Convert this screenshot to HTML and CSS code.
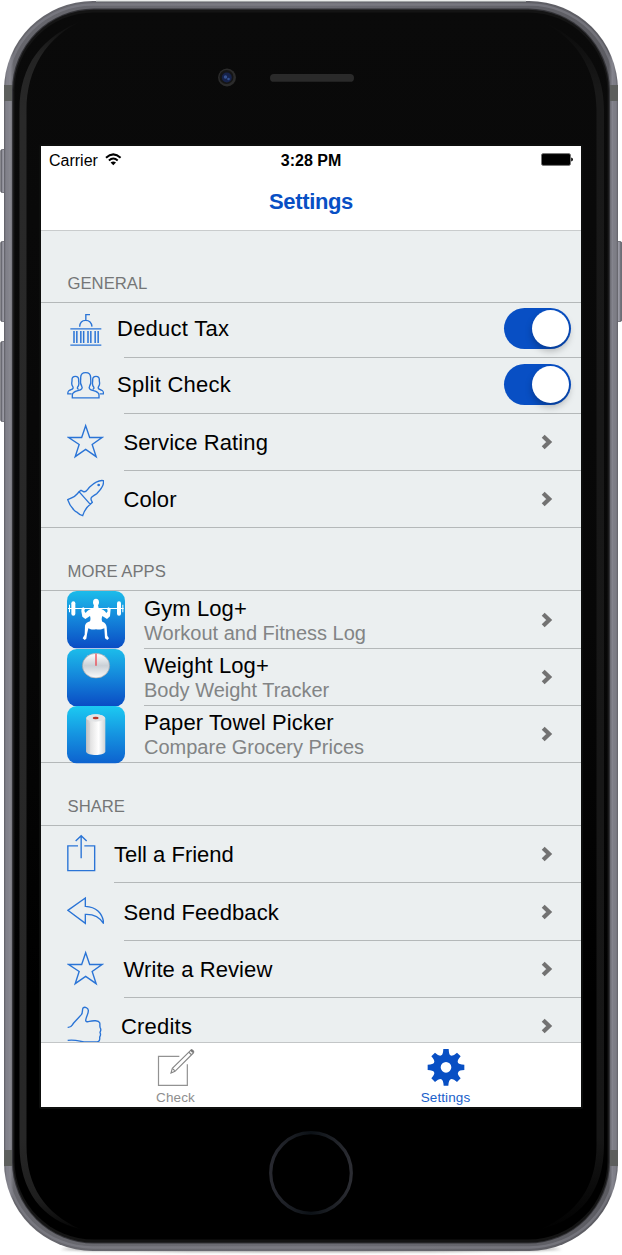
FILE: index.html
```html
<!DOCTYPE html>
<html lang="en">
<head>
<meta charset="utf-8">
<title>Settings</title>
<link rel="stylesheet" href="styles.css">
</head>
<body>
<svg width="0" height="0" class="defs" aria-hidden="true">
  <defs>
    <linearGradient id="app-blue" x1="0" y1="0" x2="0" y2="1"><stop offset="0" stop-color="#1cbcea"/><stop offset=".5" stop-color="#1484da"/><stop offset="1" stop-color="#0a4cc4"/></linearGradient>
    <linearGradient id="app-sky" x1="0" y1="0" x2="0" y2="1"><stop offset="0" stop-color="#1ccaf2"/><stop offset=".5" stop-color="#1593e0"/><stop offset="1" stop-color="#0d62cf"/></linearGradient>
    <linearGradient id="dial" x1="0" y1="0" x2="0" y2="1"><stop offset="0" stop-color="#fff"/><stop offset=".5" stop-color="#c9d0d6"/><stop offset="1" stop-color="#fafafa"/></linearGradient>
    <linearGradient id="roll" x1="0" y1="0" x2="1" y2="0"><stop offset="0" stop-color="#b9bcc0"/><stop offset=".25" stop-color="#e4e4e4"/><stop offset=".65" stop-color="#fff"/><stop offset="1" stop-color="#cfd3d6"/></linearGradient>
    <symbol id="chevron" viewBox="0 0 12 16"><path d="M2.2 2.200 8.200 8l-6 5.800" fill="none" stroke="#727272" stroke-width="4.200"/></symbol>
    <symbol id="star" viewBox="201 552 111 171"><path d="M257 587 269 622.500H306L276.500 643.500 288.500 680 257 658 225.500 680 237.500 643.500 206 622.500H245Z"/></symbol>
  </defs>
</svg>
<main class="phone">
  <svg class="frame" viewBox="0 0 622 1255" aria-hidden="true">
    <defs>
      <linearGradient id="metal" x1="0" x2="1" y1="0" y2="0"><stop offset="0" stop-color="#606067"/><stop offset=".004" stop-color="#7d7d86"/><stop offset=".01" stop-color="#898991"/><stop offset=".016" stop-color="#66666c"/><stop offset=".5" stop-color="#6c6c74"/><stop offset=".985" stop-color="#5c5c62"/><stop offset=".991" stop-color="#85858e"/><stop offset="1" stop-color="#65656c"/></linearGradient>
      <linearGradient id="glass" x1="0" x2="0" y1="0" y2="1"><stop offset="0" stop-color="#0a0a0a"/><stop offset=".5" stop-color="#070707"/><stop offset=".8" stop-color="#000"/></linearGradient>
      <linearGradient id="shineL" gradientUnits="userSpaceOnUse" x1="0" x2="0" y1="20" y2="1235"><stop offset="0" stop-color="#2a2a2a" stop-opacity="0"/><stop offset=".03" stop-color="#232323"/><stop offset=".08" stop-color="#292929"/><stop offset=".92" stop-color="#272727"/><stop offset=".97" stop-color="#1e1e1e"/><stop offset="1" stop-color="#222" stop-opacity="0"/></linearGradient>
      <linearGradient id="shineR" gradientUnits="userSpaceOnUse" x1="0" x2="0" y1="20" y2="1235"><stop offset="0" stop-color="#1a1a1a" stop-opacity="0"/><stop offset=".06" stop-color="#191919"/><stop offset=".92" stop-color="#161616"/><stop offset="1" stop-color="#161616" stop-opacity="0"/></linearGradient>
      <linearGradient id="ring" x1="1" y1="0" x2="0" y2="0"><stop offset="0" stop-color="#2c2d33"/><stop offset=".5" stop-color="#0c1116"/><stop offset="1" stop-color="#282930"/></linearGradient>
      <linearGradient id="key" x1="0" x2="1" y1="0" y2="0"><stop offset="0" stop-color="#55555d"/><stop offset=".5" stop-color="#a3a3ad"/><stop offset="1" stop-color="#55555d"/></linearGradient>
      <filter id="soft" x="-10%" y="-200%" width="120%" height="500%"><feGaussianBlur stdDeviation="1.500"/></filter>
    </defs>
    <ellipse cx="311" cy="1249" rx="250" ry="3" fill="#999" filter="url(#soft)"/>
    <g fill="url(#key)" stroke="#53535b" stroke-width=".7">
      <rect x=".7" y="149.500" width="5" height="43" rx="1.500"/><rect x=".7" y="241.500" width="5" height="80" rx="1.500"/>
      <rect x=".7" y="341.500" width="5" height="80" rx="1.500"/><rect x="616" y="241.500" width="5.600" height="80" rx="1.500"/>
    </g>
    <rect x="4" y="1" width="614" height="1250" rx="89" fill="url(#metal)"/>
    <rect x="6.500" y="4.500" width="609" height="1243" rx="86" fill="none" stroke="#85858e" stroke-width="2.500" opacity=".55"/>
    <g fill="#5d5f5d"><path d="M4 85h9v16H4zM4 1150h9v16H4zM609 85h9v16h-9zM609 1150h9v16h-9z"/></g>
    <path d="M96 1.200H526" stroke="#b9bdbc"/>
    <rect x="12" y="8.500" width="598" height="1235" rx="82" fill="#333337"/>
    <rect x="13.200" y="9.700" width="595.600" height="1232.800" rx="80.500" fill="#141414"/>
    <rect x="14.500" y="12.500" width="593" height="1227" rx="79" fill="url(#glass)"/>
    <path d="M84 20C42 36 19.500 65 19.500 110V1145C19.500 1192 43 1220 80 1229 45 1213 26.500 1187 26.500 1145V110C26.500 70 46 36 84 20Z" fill="url(#shineL)"/>
    <path d="M538 20C580 36 604 65 604 110V1145C604 1192 580 1220 541 1229 577 1213 596.500 1187 596.500 1145V110C596.500 70 576 36 538 20Z" fill="url(#shineR)"/>
    <circle cx="227" cy="77.500" r="9" fill="#2b2b2b"/><circle cx="226.500" cy="77" r="7" fill="#151515"/><circle cx="226.800" cy="77.500" r="5" fill="#16224a"/><circle cx="225.500" cy="77" r="1.700" fill="#365291"/><circle cx="228.500" cy="79" r="1.300" fill="#31508f"/>
    <rect x="270" y="74" width="84" height="7.800" rx="3.900" fill="#2a2a2a"/>
    <rect x="39" y="144" width="544" height="965" rx="2" fill="#0d0e0d"/>
    <circle cx="311" cy="1173" r="40.300" fill="#000" stroke="url(#ring)" stroke-width="3.200"/>
  </svg>

  <div class="screen">
    <header class="navbar">
      <div class="status">
        <span class="carrier">Carrier
          <svg width="17" height="13" viewBox="0 0 17 13"><g fill="none" stroke="#000" stroke-width="2"><path d="M1 4.700Q8.300-2 15.600 4.700"/><path d="M3.900 7.500Q8.300 3.600 12.700 7.500"/></g><path d="M5.600 9.600Q8.300 7.600 11 9.600L8.300 12.300Z"/></svg>
        </span>
        <span class="time">3:28 PM</span>
        <svg class="battery" width="32" height="13" viewBox="0 0 32 13"><rect x=".5" y=".6" width="29" height="11.800" rx="1.600" stroke="#777" stroke-width=".8"/><path d="M30.200 4.500q1.800.3 1.800 2t-1.800 2z"/></svg>
      </div>
      <h1 class="title">Settings</h1>
    </header>

    <div class="list">
      <h2 class="section first">GENERAL</h2>
      <div class="row toggle-row h55">
        <svg class="icon" viewBox="201 219 111 165"><path d="M211 296.500H304M211 345.500H304M239 290Q240 271 257 271T276 290M257.500 271V254H270"/><path stroke-width="4.500" d="M222 303V339M230.500 303V339M242.500 303V339M251 303V339M264 303V339M272.500 303V339M285.500 303V339M294.500 303V339"/></svg>
        <span class="label x13">Deduct Tax</span><span class="switch"><i></i></span>
      </div>
      <div class="row toggle-row h56">
        <svg class="icon" viewBox="201 384 111 168"><path d="M217 503.500V495C217 487 224 485 234 482 245 479 249 475 245 468 238 459 243 453 242 443 242 433 247 428 257 428S272 433 272 443C271 453 276 459 269 468 265 475 269 479 280 482 290 485 297 487 297 495V503.500Z"/><path d="M215 491.500H203.500C203 482 207 481 213 479 219 477 221 474 218 469 212 461 217 457 216 449 216 442 220 439 226 439S236 442 236 449C235 457 240 463 233 471 231 475 233 477 236 478M299 491.500H310.500C311 482 307 481 301 479 295 477 293 474 296 469 302 461 297 457 298 449 298 442 294 439 288 439S278 442 278 449C279 457 274 463 281 471 283 475 281 477 278 478"/></svg>
        <span class="label x13">Split Check</span><span class="switch"><i></i></span>
      </div>
      <div class="row h57">
        <svg class="icon"><use href="#star"/></svg>
        <span class="label x19">Service Rating</span><svg class="chevron"><use href="#chevron"/></svg>
      </div>
      <div class="row last h57">
        <svg class="icon" viewBox="201 723 111 171"><path d="M203 809C217 804 230 798 237 785L243 781 249 784C259 790 261 779 269 771 282 759 295 749 310 752 313 763 301 780 290 791 281 798 268 801 275 813L277 817 271 823C258 833 252 844 248 857 239 855 234 850 230 846L226 844C216 835 208 825 203 809ZM237 785 271 823"/><circle cx="296" cy="765" r="2"/></svg>
        <span class="label x19">Color</span><svg class="chevron"><use href="#chevron"/></svg>
      </div>

      <h2 class="section">MORE APPS</h2>
      <div class="row app h58">
        <svg class="app-icon" viewBox="0 0 174 174"><rect width="174" height="172" rx="29" fill="url(#app-blue)"/><g fill="#fff"><path d="M3 51H170V54H3z"/><rect x="13" y="31" width="12" height="43" rx="6"/><rect x="150" y="31" width="12" height="43" rx="6"/><path d="M6 41h3v23h-3zM166 41h3v23h-3z"/><ellipse cx="87" cy="34" rx="9" ry="11"/><path d="M81 42H93L95 52C107 55 113 58 118 66L122 61 120 52 125 49 131 53 129 76 120 84 106 75C103 82 104 88 106 92 114 94 118 100 119 108L121 134 126 142 121 147 114 142 112 112C102 117 94 116 87 115 80 116 72 117 64 112L60 130 58 143 53 147 47 142 53 131 54 104C56 97 61 93 69 91 71 86 71 81 69 75L55 84 46 77 43 61 44 51 50 49 54 53 52 60 56 66C61 58 68 55 79 52Z"/></g></svg>
        <div class="app-text"><span class="label">Gym Log+</span><span class="sub">Workout and Fitness Log</span></div><svg class="chevron"><use href="#chevron"/></svg>
      </div>
      <div class="row app h57">
        <svg class="app-icon" viewBox="0 0 174 174"><rect width="174" height="172" rx="29" fill="url(#app-blue)"/><ellipse cx="87" cy="50" rx="41" ry="37" fill="url(#dial)" stroke="#9b9da1" stroke-width="2"/><path d="M87 14V50" stroke="#f0303b" stroke-width="3.500"/></svg>
        <div class="app-text"><span class="label">Weight Log+</span><span class="sub">Body Weight Tracker</span></div><svg class="chevron"><use href="#chevron"/></svg>
      </div>
      <div class="row app last h57">
        <svg class="app-icon" viewBox="0 0 174 174"><rect width="174" height="172" rx="29" fill="url(#app-sky)"/><path d="M57 36C62 22 109 22 115 36V137C110 150 62 150 57 137Z" fill="url(#roll)"/><ellipse cx="86" cy="36" rx="28" ry="11" fill="#e2e4e6"/><path d="M66 50V143" stroke="#c6c8ca" stroke-width="2"/><ellipse cx="86" cy="36" rx="9" ry="4" fill="#b9372b"/></svg>
        <div class="app-text"><span class="label">Paper Towel Picker</span><span class="sub">Compare Grocery Prices</span></div><svg class="chevron"><use href="#chevron"/></svg>
      </div>

      <h2 class="section">SHARE</h2>
      <div class="row sep-73 h57">
        <svg class="icon" viewBox="201 138 111 171"><path d="M234 197.500H203.500V272H284V197.500H253M243.500 235V167M227 183 243.500 167 260 183"/></svg>
        <span class="label x10">Tell a Friend</span><svg class="chevron"><use href="#chevron"/></svg>
      </div>
      <div class="row h58">
        <svg class="icon" viewBox="201 309 111 174"><path d="M203.500 391 256 354V379C288 380 309 400 311 431 298 409 281 402 256 403V430Z"/></svg>
        <span class="label x19">Send Feedback</span><svg class="chevron"><use href="#chevron"/></svg>
      </div>
      <div class="row h57">
        <svg class="icon"><use href="#star"/></svg>
        <span class="label x19">Write a Review</span><svg class="chevron"><use href="#chevron"/></svg>
      </div>
      <div class="row last h57">
        <svg class="icon" viewBox="201 654 111 171"><path d="M203 742C215 743 215 736 221 729L244 704C249 698 246 690 249 684 254 680 264 682 265 691 266 700 258 711 257 721 257 726 263 726 268 724 280 721 296 721 299 728 301 735 298 738 301 744 305 751 300 754 300 758 304 765 300 768 299 771 300 779 298 787 289 786H262C240 786 234 778 203 781"/></svg>
        <span class="label x16">Credits</span><svg class="chevron"><use href="#chevron"/></svg>
      </div>
    </div>

    <nav class="tabs">
      <a class="tab"><svg width="40" height="40" viewBox="468 54 120 120"><path d="M538 79H475.500V166H562V103" fill="none" stroke="#929292" stroke-width="3.600"/><path d="M513 129 517 115 572 61Q575 58 579 62T580 69L525 124ZM566 66 575 75M519 117 524 122" fill="none" stroke="#858585" stroke-width="3.300"/><path d="M570 61 575 58 581 64 577 69Z" fill="#777"/></svg><span>Check</span></a>
      <a class="tab active"><svg width="40" height="40" viewBox="344 54 120 120"><path fill="#084fc4" fill-rule="evenodd" d="M396 57H412Q413 74 417 76 424 80 437 68L448 79Q436 92 440 98 442 103 459 104V120Q443 120 441 126 436 132 448 145L437 156Q424 144 418 148 412 150 411 167H397Q396 151 390 148 384 144 371 156L360 145Q372 132 368 126 366 121 349 120V104Q366 103 368 98 372 92 360 79L371 68Q384 80 390 76 395 74 396 57ZM404 96a16 16 0 1 0 0 32 16 16 0 0 0 0-32Z"/></svg><span>Settings</span></a>
    </nav>
  </div>
</main>
</body>
</html>
```
FILE: styles.css
```css
* { box-sizing: border-box; }
body { margin: 0; background: #fff; font-family: "Liberation Sans", Arial, sans-serif; color: #000; }
.defs { position: absolute; }
svg { display: block; flex: none; }

.phone { position: relative; width: 622px; height: 1255px; padding: 146px 41px 0; overflow: hidden; }
.frame { position: absolute; inset: 0; width: 622px; height: 1255px; }
.screen { position: relative; display: flex; flex-direction: column; width: 540px; height: 961px; overflow: hidden; background: #ebeff0; }

.navbar { flex: none; height: 85px; background: #fff; border-bottom: 1px solid #c9cccd; }
.status { display: grid; grid-template-columns: 1fr auto 1fr; align-items: center; height: 28px; padding: 1px 8px 0; font-size: 16px; }
.carrier { display: flex; align-items: center; gap: 7px; }
.carrier svg { margin-top: -3px; }
.time { font-weight: bold; }
.battery { justify-self: end; margin-top: -2px; }
.title { margin: 0; color: #084fc4; font-size: 22px; line-height: 56px; letter-spacing: -.35px; text-align: center; }

.list { flex: 1; min-height: 0; overflow: hidden; }
.section { display: flex; align-items: flex-end; height: 63px; margin: 0; padding: 0 26.500px 8px; border-bottom: 1px solid #b4b8b9; color: #747677; font-size: 16.700px; font-weight: normal; line-height: 20px; }
.section.first { height: 72px; }
.row { --sep: 83px; display: flex; align-items: center; padding: 0 28px 0 26px; background: linear-gradient(#b4b8b9, #b4b8b9) no-repeat right bottom / calc(100% - var(--sep)) 1px; }
.row.sep-73 { --sep: 73px; }
.row.app { --sep: 103px; }
.row.last { --sep: 0px; }
.h55 { height: 55px; }
.h56 { height: 56px; }
.h57 { height: 57px; }
.h58 { height: 58px; }

.icon { width: 37px; height: 100%; fill: none; stroke: #2a74d6; stroke-width: 4.100; }
.label { font-size: 22px; line-height: 25px; letter-spacing: .1px; white-space: nowrap; }
.x10 { margin-left: 10px; letter-spacing: 0; }
.x13 { margin-left: 13px; letter-spacing: .25px; }
.x16 { margin-left: 17px; letter-spacing: .2px; }
.x19 { margin-left: 19.500px; }
.chevron { width: 12px; height: 16px; margin: 0 0 1px auto; }

.toggle-row { padding-right: 10.500px; }
.toggle-row .label, .toggle-row .switch { margin-bottom: 4px; }
.switch { display: flex; justify-content: flex-end; width: 66.500px; height: 41px; margin-left: auto; padding: 2px; border-radius: 21px; background: #084fc4; }
.switch i { width: 37px; height: 37px; border-radius: 50%; background: #fff; box-shadow: 0 4px 7px rgba(0, 0, 0, .25); }

.app-icon { width: 58px; height: 58px; }
.app-text { display: flex; flex-direction: column; margin-left: 19px; }
.sub { color: #828485; font-size: 20px; line-height: 24px; white-space: nowrap; }

.tabs { display: flex; flex: none; height: 65px; border-top: 1px solid #c3c6c7; background: #fff; }
.tab { display: flex; flex: 1; flex-direction: column; align-items: center; gap: 2px; padding: 5px 1px 0 0; color: #8e8e8e; font-size: 13.500px; line-height: 15px; letter-spacing: .1px; }
.tab.active { color: #1a5fca; }
```
